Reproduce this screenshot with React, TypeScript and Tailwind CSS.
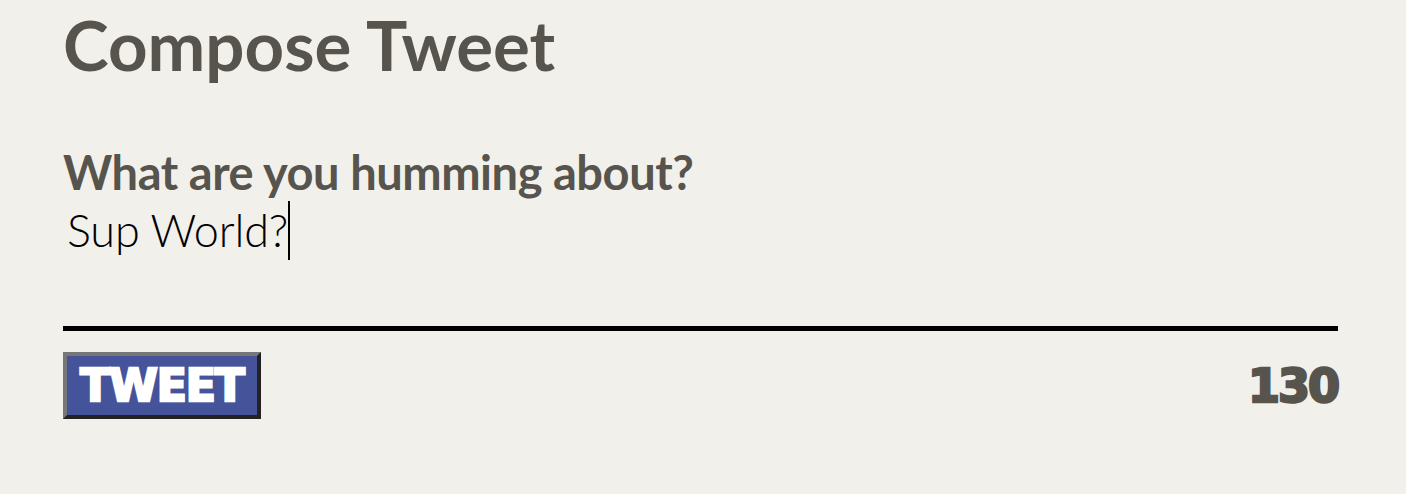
export default function App() {
  return (
    <div className="min-h-screen bg-[#f2f0eb] pl-[63px] pr-[68px] pt-[5px] text-[#57534d]" style={{ fontFamily: "Lato, 'Open Sans', sans-serif" }}>
      <h1 className="text-[69px] font-bold leading-[80px]">Compose Tweet</h1>
      <div className="mt-[59px]">
        <label className="block text-[47px] font-bold leading-[56px] tracking-[-0.45px]">What are you humming about?</label>
        <div className="flex items-center pl-[4px] text-[45px] font-light leading-[60px] text-black">
          <span className="tracking-[-0.2px]">Sup World?</span>
          <span className="ml-[0px] inline-block h-[59px] w-[1.5px] bg-black" />
        </div>
      </div>
      <div className="mt-[66px] h-[5px] bg-black" />
      <div className="mt-[21px] flex items-center justify-between">
        <button
          className="h-[67px] w-[198px] border-[4px] border-t-[#777777] border-l-[#777777] border-b-[#222222] border-r-[#222222] bg-[#45549a] text-[44px] font-bold leading-none tracking-[-1px] text-white [-webkit-text-stroke:2.5px_#ffffff]"
          style={{ fontFamily: "'DejaVu Sans', sans-serif" }}
        >
          TWEET
        </button>
        <span
          className="text-[46px] font-bold leading-none tracking-[-2px] text-[#57534d] [-webkit-text-stroke:2.5px_#57534d]"
          style={{ fontFamily: "'DejaVu Sans', sans-serif" }}
        >
          130
        </span>
      </div>
    </div>
  );
}
